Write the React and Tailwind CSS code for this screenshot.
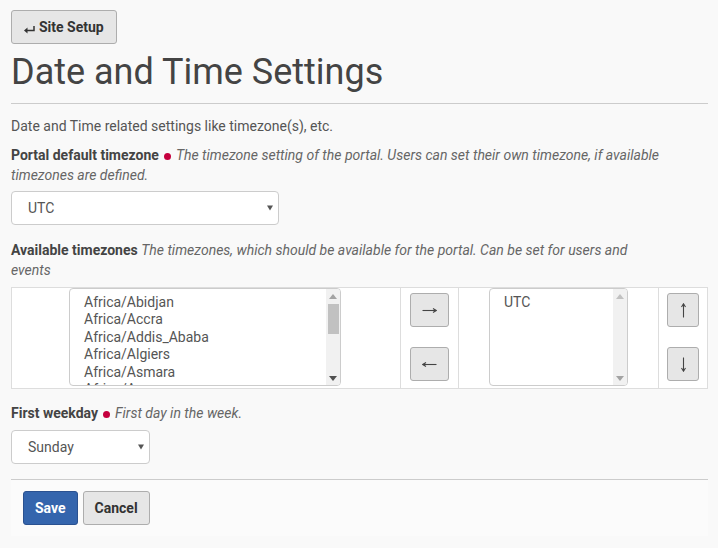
import React from "react";

const ZONES = ["Africa/Abidjan", "Africa/Accra", "Africa/Addis_Ababa", "Africa/Algiers", "Africa/Asmara", "Africa/Asmera"];

function Caret() {
  return (
    <svg width="6" height="6" viewBox="0 0 6 6" className="shrink-0">
      <path d="M0 0.5 L6 0.5 L3 5.5 Z" fill="#555" />
    </svg>
  );
}

function FakeSelect({ value, width }) {
  return (
    <div className={`${width} h-[34px] flex items-center justify-between bg-white border border-[#ccc] rounded-[4px] pl-[16px] pr-[5px] text-[14px] text-[#555]`}>
      <span>{value}</span>
      <Caret />
    </div>
  );
}

function ScrollBar({ thumb }) {
  return (
    <div className="w-[14px] bg-[#f1f1f1] flex flex-col items-center">
      <div className="h-[14px] flex items-center justify-center">
        <svg width="8" height="5" viewBox="0 0 8 5"><path d="M0 5 L8 5 L4 0 Z" fill={thumb ? "#a3a3a3" : "#c1c1c1"} /></svg>
      </div>
      {thumb && <div className="w-[11px] h-[30px] bg-[#c1c1c1] mt-[1px]" />}
      <div className="flex-1" />
      <div className="h-[14px] flex items-center justify-center">
        <svg width="8" height="5" viewBox="0 0 8 5"><path d="M0 0 L8 0 L4 5 Z" fill={thumb ? "#505050" : "#a3a3a3"} /></svg>
      </div>
    </div>
  );
}

// thin arrow, drawn pointing right and rotated
function Arrow({ rot }) {
  return (
    <svg width="15" height="15" viewBox="0 0 15 15" style={{ transform: `rotate(${rot}deg)` }}>
      <path d="M0.5 7.5 H14" fill="none" stroke="#444" strokeWidth="1.1" />
      <path d="M11 5.5 L14.2 7.5 L11 9.5" fill="none" stroke="#444" strokeWidth="1.1" />
    </svg>
  );
}

function ArrowBtn({ rot, w }) {
  return (
    <div className={`${w} h-[34px] flex items-center justify-center bg-[#e6e6e6] border border-[#adadad] rounded-[3px]`}>
      <Arrow rot={rot} />
    </div>
  );
}

function Dot() {
  return <span className="inline-block w-[7px] h-[7px] rounded-full bg-[#c5003e] mx-[5px] align-middle" />;
}

export default function App() {
  return (
    <div className="min-h-[548px] bg-[#f9f9f9] pl-[11px] pr-[10px] pt-[10px] font-['Roboto',sans-serif] text-[14px] text-[#555]">
      {/* Back button */}
      <button className="h-[34px] pl-[12px] pr-[12px] flex items-center gap-[4px] bg-[#e6e6e6] border border-[#adadad] rounded-[3px] text-[14px] font-bold text-[#333]">
        <svg width="11" height="8" viewBox="0 0 11 8" className="mt-[5px]">
          <path d="M10 0 V4.5 H2" fill="none" stroke="#333" strokeWidth="1.5" />
          <path d="M0 4.5 L3.5 1.6 L3.5 7.4 Z" fill="#333" />
        </svg>
        Site Setup
      </button>

      <h1 className="text-[36px] leading-[46px] text-[#444] mt-[5px] pb-[8px] border-b border-[#ccc]">Date and Time Settings</h1>

      <p className="mt-[12px] leading-[20px]">Date and Time related settings like timezone(s), etc.</p>

      {/* Portal default timezone */}
      <div className="mt-[9px] leading-[20px] pr-[40px]">
        <span className="font-bold text-[#444]">Portal default timezone</span>
        <Dot />
        <span className="italic text-[#666]">The timezone setting of the portal. Users can set their own timezone, if available timezones are defined.</span>
      </div>
      <div className="mt-[6px]">
        <FakeSelect value="UTC" width="w-[268px]" />
      </div>

      {/* Available timezones */}
      <div className="mt-[15px] leading-[20px] pr-[70px]">
        <span className="font-bold text-[#444]">Available timezones</span>{" "}
        <span className="italic text-[#666]">The timezones, which should be available for the portal. Can be set for users and events</span>
      </div>
      <div className="mt-[7px] grid grid-cols-[388px_58px_200px_1fr] h-[102px] bg-white border border-[#ddd]">
        <div className="flex pl-[57px]">
          <div className="w-[272px] h-[98px] flex bg-white border border-[#ccc] rounded-[4px] overflow-hidden">
            <div className="flex-1 pl-[14px] pt-[5px] text-[14px] leading-[17.4px] text-[#555] overflow-hidden">
              {ZONES.map((z) => (
                <div key={z}>{z}</div>
              ))}
            </div>
            <ScrollBar thumb />
          </div>
        </div>
        <div className="border-l border-[#ddd] flex flex-col items-center pt-[5px] gap-[20px]">
          <ArrowBtn w="w-[39px]" rot={0} />
          <ArrowBtn w="w-[39px]" rot={180} />
        </div>
        <div className="border-l border-[#ddd] flex justify-center">
          <div className="w-[139px] h-[98px] flex bg-white border border-[#ccc] rounded-[4px] overflow-hidden">
            <div className="flex-1 pl-[14px] pt-[5px] text-[14px] leading-[17.4px] text-[#555]">UTC</div>
            <ScrollBar />
          </div>
        </div>
        <div className="border-l border-[#ddd] flex flex-col items-center pt-[5px] gap-[20px]">
          <ArrowBtn w="w-[32px]" rot={-90} />
          <ArrowBtn w="w-[32px]" rot={90} />
        </div>
      </div>

      {/* First weekday */}
      <div className="mt-[14px] leading-[20px]">
        <span className="font-bold text-[#444]">First weekday</span>
        <Dot />
        <span className="italic text-[#666]">First day in the week.</span>
      </div>
      <div className="mt-[7px]">
        <FakeSelect value="Sunday" width="w-[139px]" />
      </div>

      {/* Actions */}
      <div className="mt-[15px] border-t border-[#ccc] bg-[#fbfbfb] h-[57px] flex items-center gap-[5px] pl-[12px]">
        <button className="h-[34px] px-[11px] bg-[#3465ad] border border-[#2a5190] rounded-[3px] text-white font-bold text-[14px]">Save</button>
        <button className="h-[34px] px-[11px] bg-[#e6e6e6] border border-[#adadad] rounded-[3px] text-[#333] font-bold text-[14px]">Cancel</button>
      </div>
    </div>
  );
}
